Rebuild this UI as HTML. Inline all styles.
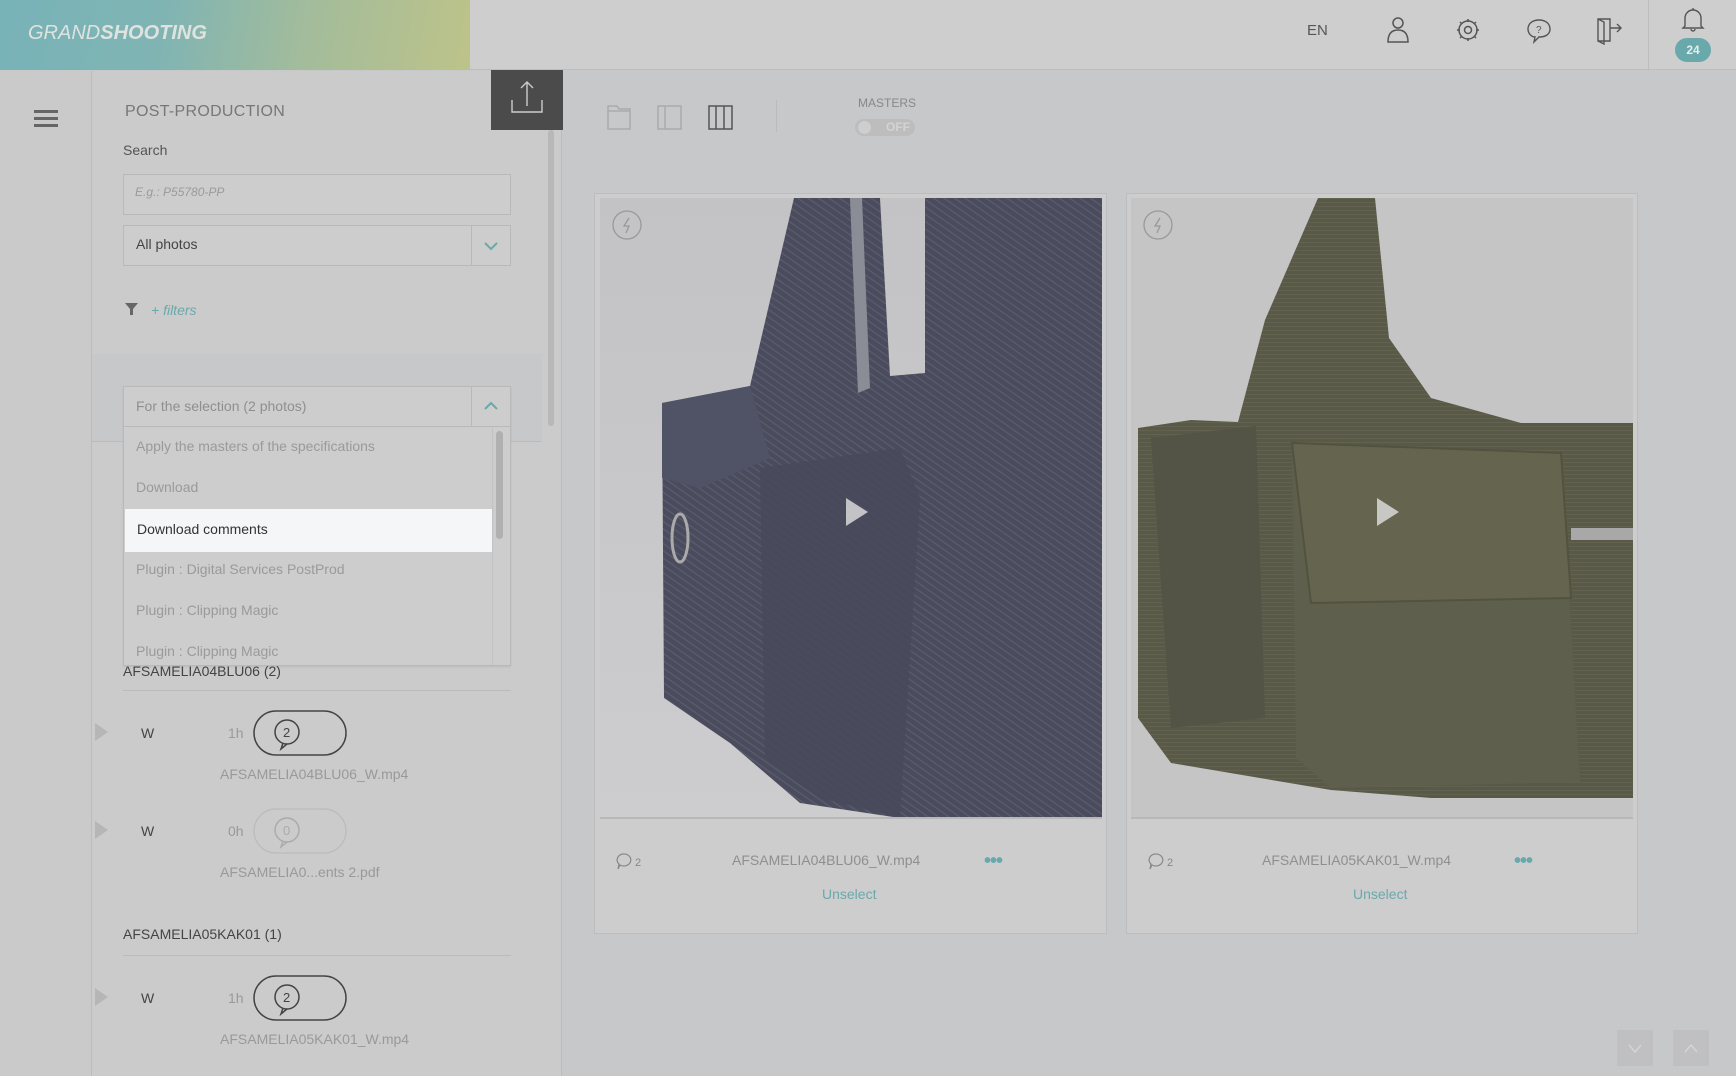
<!DOCTYPE html>
<html><head><meta charset="utf-8"><style>
*{margin:0;padding:0;box-sizing:border-box}
body{width:1736px;height:1076px;overflow:hidden;background:#c7c8ca;font-family:"Liberation Sans",sans-serif;position:relative;color:#555}
.abs{position:absolute}
.t{position:absolute;white-space:nowrap}
</style></head><body>
<!-- header -->
<div class="abs" style="left:0;top:0;width:1736px;height:70px;background:#cecece;border-bottom:1px solid #bdbdbd"></div>
<div class="abs" style="left:0;top:0;width:470px;height:70px;background:linear-gradient(100deg,#78b3b8 0%,#80b4b3 35%,#a3bc9b 65%,#bdc389 100%)"></div>
<div class="t" style="left:28px;top:22px;font-size:20px;font-style:italic;color:#dfe3e0;letter-spacing:0px"><span style="font-weight:300">GRAND</span><b>SHOOTING</b></div>
<div class="t" style="left:1307px;top:22px;font-size:15px;color:#555">EN</div>
<svg class="abs" style="left:1386px;top:16px" width="24" height="28" viewBox="0 0 24 28" fill="none" stroke="#555" stroke-width="1.5"><circle cx="12" cy="7" r="5"/><path d="M2 26 Q2 14 12 14 Q22 14 22 26 Z"/></svg>
<svg class="abs" style="left:1455px;top:17px" width="26" height="26" viewBox="0 0 26 26" fill="none" stroke="#555" stroke-width="1.5"><circle cx="13" cy="13" r="9"/><circle cx="13" cy="13" r="3.5"/><path d="M13 2v3M13 21v3M2 13h3M21 13h3M5 5l2 2M19 19l2 2M5 21l2-2M19 7l2-2"/></svg>
<svg class="abs" style="left:1525px;top:17px" width="28" height="28" viewBox="0 0 28 28" fill="none" stroke="#555" stroke-width="1.4"><path d="M14 3C7 3 3 7 3 12c0 5 4 8 7 8l-1 5 5-5c7 0 11-3 11-8S21 3 14 3z"/><text x="11" y="16" font-size="10" fill="#555" stroke="none" font-family="Liberation Sans">?</text></svg>
<svg class="abs" style="left:1595px;top:15px" width="30" height="30" viewBox="0 0 30 30" fill="none" stroke="#555" stroke-width="1.4"><path d="M3 4h12v22H3zM3 4l6 3v22l-6-3"/><path d="M15 13h11M22 9l4 4-4 4"/></svg>
<div class="abs" style="left:1648px;top:0;width:1px;height:70px;background:#bdbdbd"></div>
<svg class="abs" style="left:1680px;top:6px" width="26" height="26" viewBox="0 0 26 26" fill="none" stroke="#555" stroke-width="1.4"><path d="M5 20V12a8 8 0 0 1 16 0v8l2 2H3z"/><path d="M11 23a2 2 0 0 0 4 0"/><path d="M13 2v2"/></svg>
<div class="abs" style="left:1675px;top:38px;width:36px;height:24px;border-radius:12px;background:#6aa9ab;color:#e4eeee;font-size:12px;font-weight:bold;text-align:center;line-height:24px">24</div>

<!-- left rail -->
<div class="abs" style="left:0;top:71px;width:92px;height:1005px;background:#cacacb;border-right:1px solid #bcbcbc"></div>
<div class="abs" style="left:34px;top:110px;width:24px;height:2.5px;background:#666;box-shadow:0 7px 0 #666,0 14px 0 #666"></div>

<!-- sidebar -->
<div class="abs" style="left:92px;top:71px;width:470px;height:1005px;background:#cbcbcc;border-right:1px solid #bcbcbc"></div>
<div class="abs" style="left:92px;top:354px;width:450px;height:1px;background:#bbb"></div>
<div class="abs" style="left:92px;top:354px;width:450px;height:87px;background:#c7c8ca"></div>
<div class="abs" style="left:92px;top:441px;width:450px;height:1px;background:#bbb"></div>
<div class="abs" style="left:548px;top:130px;width:6px;height:296px;background:#b8b8b8;border-radius:3px"></div>
<div class="abs" style="left:491px;top:70px;width:72px;height:60px;background:#4b4b4b"></div>
<svg class="abs" style="left:510px;top:80px" width="34" height="36" viewBox="0 0 34 36" fill="none" stroke="#ccc" stroke-width="1.4"><path d="M17 2v24M11 8l6-6 6 6"/><path d="M2 20v12h30V20"/></svg>
<div class="t" style="left:125px;top:103px;font-size:16px;color:#777;letter-spacing:0.3px">POST-PRODUCTION</div>
<div class="t" style="left:123px;top:142px;font-size:14px;color:#555">Search</div>
<div class="abs" style="left:123px;top:174px;width:388px;height:41px;border:1px solid #b9b9b9;background:#cdcdcd"></div>
<div class="t" style="left:135px;top:185px;font-size:12px;font-style:italic;color:#9a9a9a">E.g.: P55780-PP</div>
<div class="abs" style="left:123px;top:225px;width:388px;height:41px;border:1px solid #b9b9b9;background:#cdcdcd"></div>
<div class="abs" style="left:471px;top:225px;width:1px;height:41px;background:#b9b9b9"></div>
<div class="t" style="left:136px;top:236px;font-size:14px;color:#444">All photos</div>
<svg class="abs" style="left:483px;top:240px" width="16" height="12" viewBox="0 0 16 12" fill="none" stroke="#6aa9ab" stroke-width="2"><path d="M2 3l6 6 6-6"/></svg>
<svg class="abs" style="left:125px;top:303px" width="13" height="13" viewBox="0 0 13 13"><path d="M0 0h13L8 6v6H5V6z" fill="#666"/></svg>
<div class="t" style="left:151px;top:302px;font-size:14px;font-style:italic;color:#6aa9ab">+ filters</div>

<!-- groups below dropdown -->
<div class="t" style="left:123px;top:663px;font-size:14px;color:#444">AFSAMELIA04BLU06 (2)</div>
<div class="abs" style="left:123px;top:690px;width:388px;height:1px;background:#bbb"></div>
<div class="t" style="left:123px;top:926px;font-size:14px;color:#444">AFSAMELIA05KAK01 (1)</div>
<div class="abs" style="left:123px;top:955px;width:388px;height:1px;background:#bbb"></div>

<!-- rows -->
<svg class="abs" style="left:0;top:0" width="562" height="1076">
<g font-family="Liberation Sans" font-size="14">
<path d="M95 723l13 9-13 9z" fill="#b6b6b6"/><text x="141" y="738" fill="#444">W</text><text x="228" y="738" fill="#999">1h</text>
<rect x="254" y="711" width="92" height="44" rx="22" fill="none" stroke="#444" stroke-width="1.5"/>
<circle cx="287" cy="732" r="12" fill="none" stroke="#444" stroke-width="1.5"/><path d="M283 743l-2 6 6-5" fill="none" stroke="#444" stroke-width="1.5"/><text x="283" y="737" font-size="13" fill="#444">2</text>
<text x="220" y="779" fill="#999">AFSAMELIA04BLU06_W.mp4</text>
<path d="M95 821l13 9-13 9z" fill="#b6b6b6"/><text x="141" y="836" fill="#444">W</text><text x="228" y="836" fill="#999">0h</text>
<rect x="254" y="809" width="92" height="44" rx="22" fill="none" stroke="#bbb" stroke-width="1.2"/>
<circle cx="287" cy="830" r="12" fill="none" stroke="#aaa" stroke-width="1.4"/><path d="M283 841l-2 6 6-5" fill="none" stroke="#aaa" stroke-width="1.4"/><text x="283" y="835" font-size="13" fill="#aaa">0</text>
<text x="220" y="877" fill="#999">AFSAMELIA0...ents 2.pdf</text>
<path d="M95 988l13 9-13 9z" fill="#b6b6b6"/><text x="141" y="1003" fill="#444">W</text><text x="228" y="1003" fill="#999">1h</text>
<rect x="254" y="976" width="92" height="44" rx="22" fill="none" stroke="#444" stroke-width="1.5"/>
<circle cx="287" cy="997" r="12" fill="none" stroke="#444" stroke-width="1.5"/><path d="M283 1008l-2 6 6-5" fill="none" stroke="#444" stroke-width="1.5"/><text x="283" y="1002" font-size="13" fill="#444">2</text>
<text x="220" y="1044" fill="#999">AFSAMELIA05KAK01_W.mp4</text>
</g></svg>

<!-- dropdown -->
<div class="abs" style="left:123px;top:386px;width:388px;height:280px;border:1px solid #b9b9b9;background:#cdcdcd;box-shadow:0 1px 2px rgba(0,0,0,.08)"></div>
<div class="abs" style="left:123px;top:426px;width:388px;height:1px;background:#b9b9b9"></div>
<div class="abs" style="left:471px;top:386px;width:1px;height:40px;background:#b9b9b9"></div>
<div class="abs" style="left:492px;top:427px;width:1px;height:238px;background:#c2c2c2"></div>
<svg class="abs" style="left:483px;top:400px" width="16" height="12" viewBox="0 0 16 12" fill="none" stroke="#6aa9ab" stroke-width="2"><path d="M2 9l6-6 6 6"/></svg>
<div class="t" style="left:136px;top:398px;font-size:14px;color:#8f8f8f">For the selection (2 photos)</div>
<div class="abs" style="left:496px;top:431px;width:7px;height:108px;background:#b0b0b0;border-radius:4px"></div>
<div class="abs" style="left:125px;top:509px;width:367px;height:43px;background:#f5f6f8"></div>
<div class="t" style="left:136px;top:438px;font-size:14px;color:#9a9a9a">Apply the masters of the specifications</div>
<div class="t" style="left:136px;top:479px;font-size:14px;color:#9a9a9a">Download</div>
<div class="t" style="left:137px;top:521px;font-size:14px;color:#333">Download comments</div>
<div class="t" style="left:136px;top:561px;font-size:14px;color:#9a9a9a">Plugin : Digital Services PostProd</div>
<div class="t" style="left:136px;top:602px;font-size:14px;color:#9a9a9a">Plugin : Clipping Magic</div>
<div class="t" style="left:136px;top:643px;font-size:14px;color:#9a9a9a">Plugin : Clipping Magic</div>

<!-- toolbar -->
<svg class="abs" style="left:605px;top:101px" width="140" height="30" viewBox="0 0 140 30" fill="none" stroke-width="1.5">
<path d="M3 5h9l2 3h11v20H3z M3 10h22" stroke="#aaa"/>
<rect x="53" y="5" width="23" height="23" stroke="#aaa"/><path d="M60 5v23" stroke="#aaa"/>
<rect x="104" y="5" width="23" height="23" stroke="#555"/><path d="M111 5v23M119 5v23" stroke="#555"/>
</svg>
<div class="abs" style="left:776px;top:100px;width:1px;height:32px;background:#bbb"></div>
<div class="t" style="left:858px;top:96px;font-size:12px;color:#888">MASTERS</div>
<div class="abs" style="left:855px;top:119px;width:60px;height:17px;border-radius:9px;background:#bdbdbd"></div>
<div class="abs" style="left:858px;top:121px;width:13px;height:13px;border-radius:50%;background:#cecece"></div>
<div class="t" style="left:886px;top:120px;font-size:12px;font-weight:bold;color:#d3d3d3">OFF</div>

<!-- cards -->
<div class="abs" style="left:594px;top:193px;width:513px;height:741px;background:#cdcdcd;border:1px solid #bdbdbd"></div>
<div class="abs" style="left:1126px;top:193px;width:512px;height:741px;background:#cdcdcd;border:1px solid #bdbdbd"></div>

<svg class="abs" style="left:600px;top:198px" width="502" height="620" viewBox="0 0 502 620">
<defs><pattern id="tw" width="6" height="6" patternUnits="userSpaceOnUse" patternTransform="rotate(35)"><rect width="6" height="6" fill="#4a4c5e"/><rect width="6" height="1.5" fill="#575a6b"/></pattern>
<linearGradient id="bg1" x1="0" y1="0" x2="0" y2="1"><stop offset="0" stop-color="#c3c3c5"/><stop offset="1" stop-color="#cdcdcf"/></linearGradient></defs>
<rect width="502" height="620" fill="url(#bg1)"/>
<path d="M194 0L280 0L290 178L325 175L325 0L502 0L502 620L300 620L200 605L130 545L64 500L62 205L150 188Z" fill="url(#tw)"/>
<path d="M62 205L150 188L170 260L100 290L62 280Z" fill="#505366"/>
<path d="M160 270L300 250L320 300L300 620L220 600L165 560Z" fill="#47495a" opacity=".8"/>
<path d="M250 0L262 0L270 190L258 195Z" fill="#8a8c96"/>
<ellipse cx="80" cy="340" rx="8" ry="24" fill="none" stroke="#aaa" stroke-width="3"/>
<path d="M246 300l22 14-22 14z" fill="#d8d8d8" opacity=".85"/>
<circle cx="27" cy="27" r="14" fill="none" stroke="#999" stroke-width="1.3"/><path d="M29 20l-5 8h5l-3 7" fill="none" stroke="#999" stroke-width="1.3"/>
</svg>
<div class="abs" style="left:600px;top:817px;width:502px;height:2px;background:#b8b8b8"></div>

<svg class="abs" style="left:1131px;top:198px" width="502" height="620" viewBox="0 0 502 620">
<defs><pattern id="cv" width="4" height="4" patternUnits="userSpaceOnUse"><rect width="4" height="4" fill="#59594a"/><rect width="4" height="1" fill="#62624f"/></pattern></defs>
<rect width="502" height="620" fill="#c5c5c6"/>
<path d="M187 0L244 0L258 140L300 200L390 225L502 225L502 600L300 600L200 592L40 565L7 520L7 230L60 222L107 224L134 122Z" fill="url(#cv)"/>
<path d="M161 245L430 255L449 584L200 590L165 560Z" fill="#5f5f4e"/>
<path d="M161 245L430 255L440 400L180 405Z" fill="#65654f" stroke="#52523f" stroke-width="2"/>
<path d="M20 240L125 228L134 520L40 530Z" fill="#545446"/>
<rect x="440" y="330" width="62" height="12" fill="#a8a8a8"/>
<path d="M246 300l22 14-22 14z" fill="#d8d8d8" opacity=".85"/>
<circle cx="27" cy="27" r="14" fill="none" stroke="#999" stroke-width="1.3"/><path d="M29 20l-5 8h5l-3 7" fill="none" stroke="#999" stroke-width="1.3"/>
</svg>
<div class="abs" style="left:1131px;top:817px;width:502px;height:2px;background:#b8b8b8"></div>

<!-- card footers -->
<svg class="abs" style="left:615px;top:852px" width="30" height="20" viewBox="0 0 30 20" fill="none" stroke="#888" stroke-width="1.2"><path d="M8 2a7 6 0 1 1-3 11l-2 4 1-5A7 6 0 0 1 8 2z"/><text x="20" y="14" font-size="11" fill="#888" stroke="none" font-family="Liberation Sans">2</text></svg>
<div class="t" style="left:732px;top:852px;font-size:14px;color:#8f8f8f">AFSAMELIA04BLU06_W.mp4</div>
<div class="t" style="left:984px;top:850px;font-size:20px;font-weight:bold;color:#6aa9ab;letter-spacing:-1px">•••</div>
<div class="t" style="left:822px;top:886px;font-size:14px;color:#6aa9ab">Unselect</div>
<svg class="abs" style="left:1147px;top:852px" width="30" height="20" viewBox="0 0 30 20" fill="none" stroke="#888" stroke-width="1.2"><path d="M8 2a7 6 0 1 1-3 11l-2 4 1-5A7 6 0 0 1 8 2z"/><text x="20" y="14" font-size="11" fill="#888" stroke="none" font-family="Liberation Sans">2</text></svg>
<div class="t" style="left:1262px;top:852px;font-size:14px;color:#8f8f8f">AFSAMELIA05KAK01_W.mp4</div>
<div class="t" style="left:1514px;top:850px;font-size:20px;font-weight:bold;color:#6aa9ab;letter-spacing:-1px">•••</div>
<div class="t" style="left:1353px;top:886px;font-size:14px;color:#6aa9ab">Unselect</div>

<!-- scroll buttons -->
<div class="abs" style="left:1617px;top:1030px;width:36px;height:36px;background:#c0c0c2"></div>
<div class="abs" style="left:1673px;top:1030px;width:36px;height:36px;background:#c0c0c2"></div>
<svg class="abs" style="left:1617px;top:1030px" width="92" height="36" fill="none" stroke="#d5d5d5" stroke-width="1.4"><path d="M12 15l6 7 6-7M68 22l6-7 6 7"/></svg>
</body></html>
